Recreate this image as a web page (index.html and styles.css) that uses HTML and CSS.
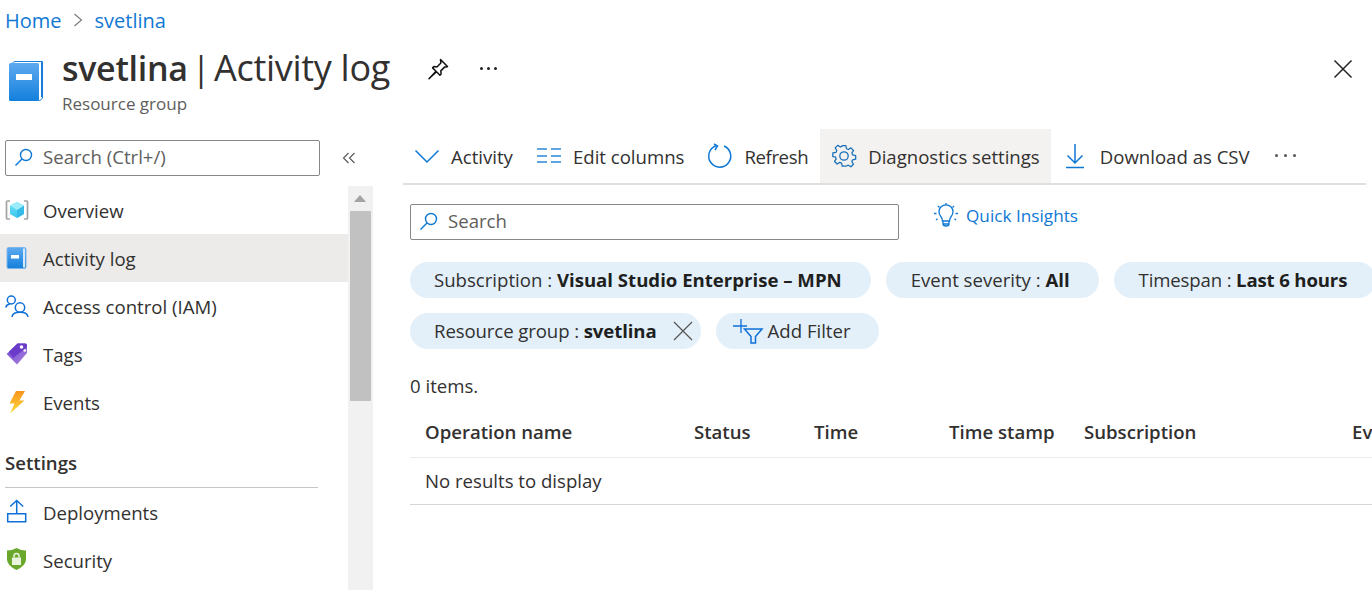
FILE: index.html
```html
<!DOCTYPE html>
<html lang="en">
<head>
<meta charset="utf-8">
<title>svetlina | Activity log</title>
<link rel="stylesheet" href="styles.css">
</head>
<body>
<svg class="defs" width="0" height="0">
  <defs>
    <linearGradient id="bookGrad" x1="0" y1="0" x2="0" y2="1"><stop offset="0" stop-color="#5ea9f0"/><stop offset="1" stop-color="#1380dc"/></linearGradient>
    <linearGradient id="tagGrad" x1="0" y1="0" x2="1" y2="1"><stop offset="0" stop-color="#6f3fd0"/><stop offset="1" stop-color="#a884dc"/></linearGradient>
    <linearGradient id="boltGrad" x1="0" y1="0" x2="0" y2="1"><stop offset="0" stop-color="#f7931e"/><stop offset="1" stop-color="#fedc3c"/></linearGradient>
    <linearGradient id="cubeGrad" x1="0" y1="0" x2="0" y2="1"><stop offset="0" stop-color="#6fe3f7"/><stop offset="1" stop-color="#3cc5ee"/></linearGradient>
  </defs>
</svg>
<nav class="breadcrumb">
  <a class="crumb">Home</a>
  <svg class="crumb-sep" width="12" height="14" viewBox="0 0 12 14"><path d="M2.500 1l7 6-7 6" fill="none" stroke="#777" stroke-width="1.100"/></svg>
  <a class="crumb">svetlina</a>
</nav>
<header class="page-header">
  <svg class="header-icon" width="34" height="40" viewBox="0 0 34 40">
    <path d="M3 2.500Q4.500.5 6 .5h27.500V37l-3 3z" fill="#fff" stroke="#1a7fd8"/>
    <path d="M32.500 1v35" stroke="#1a7fd8"/>
    <rect y="2" width="30" height="38" rx="1.500" fill="url(#bookGrad)"/>
    <rect x="7" y="13" width="16" height="6" fill="#fff"/>
  </svg>
  <div class="header-text">
    <div class="title-row">
      <h1 class="title"><b class="title-name">svetlina</b> | <span class="title-page">Activity log</span></h1>
      <svg class="pin" width="24" height="24" viewBox="0 0 24 24"><path d="M14.500 2.500l7 7-1.300.6-1.400-.2-4 4 .3 3-1.200 1.300-3.400-3.400-7.500 7 7-7.500-3.400-3.400 1.300-1.300 3 .4 4-4-.2-1.400z" fill="none" stroke="#111" stroke-width="1.500" stroke-linejoin="round"/></svg>
      <span class="title-more"><i></i><i></i><i></i></span>
    </div>
    <div class="subtitle">Resource group</div>
  </div>
  <svg class="close" width="20" height="20" viewBox="0 0 20 20"><path d="M1.500 1.500l17 17M18.500 1.500l-17 17" stroke="#222" stroke-width="1.500"/></svg>
</header>
<div class="layout">
  <aside class="sidebar">
    <div class="side-top">
      <div class="search side-search">
        <svg class="search-icon" width="20" height="20" viewBox="0 0 20 20"><circle cx="12" cy="8" r="5.500" fill="none" stroke="#0f78d4" stroke-width="1.400"/><path d="M8 12l-6.500 6.500" stroke="#0f78d4" stroke-width="1.400"/></svg>
        <span>Search (Ctrl+/)</span>
      </div>
      <svg class="collapse" width="14" height="12" viewBox="0 0 14 12"><path d="M6.500 1L1.500 6l5 5M12.500 1l-5 5 5 5" fill="none" stroke="#555" stroke-width="1.100"/></svg>
    </div>
    <div class="side-body">
      <ul class="menu">
        <li class="menu-item">
          <svg class="menu-icon" width="24" height="24" viewBox="0 0 24 24"><path d="M5 3H2.500Q1.500 3 1.500 4v16q0 1 1 1H5M19 3h2.500q1 0 1 1v16q0 1-1 1H19" fill="none" stroke="#a3a3a3" stroke-width="1.700"/><path d="M12 4l7 3.500v8.500l-7 4-7-4V7.500z" fill="url(#cubeGrad)"/><path d="M12 12l7-4.500v8.500l-7 4z" fill="#36bce6"/><path d="M12 12L5 7.500 12 4l7 3.500z" fill="#9cebf9"/></svg>
          <span>Overview</span>
        </li>
        <li class="menu-item active">
          <svg class="menu-icon" width="24" height="24" viewBox="0 0 24 24"><path d="M3.500 1.500h16q1.500 0 1.500 1.500v18q0 1.500-1.500 1.500h-16q-1.500 0-1.500-1.500V3q0-1.500 1.500-1.500z" fill="url(#bookGrad)" stroke="#7db7ea"/><rect x="18" y="2.500" width="2" height="19" fill="#d6e9fa"/><rect x="6" y="9" width="8" height="3.500" fill="#fff"/></svg>
          <span>Activity log</span>
        </li>
        <li class="menu-item">
          <svg class="menu-icon" width="24" height="24" viewBox="0 0 24 24"><g fill="none" stroke="#0f6fd8" stroke-width="1.500"><circle cx="6.300" cy="6" r="4"/><circle cx="15" cy="13.500" r="4.700"/><path d="M.8 13.500q.6-3 4-3.500M7 23q.5-4.800 8-4.800T23 23"/></g></svg>
          <span>Access control (IAM)</span>
        </li>
        <li class="menu-item">
          <svg class="menu-icon" width="24" height="24" viewBox="0 0 24 24"><path d="M12.500 1.500l7.500 0q2 0 2 2v7.500L12 22.500 1.700 12z" fill="url(#tagGrad)"/><path d="M12.500 1.500l7.500 0q2 0 2 2v1.500L8 16 4 9.500z" fill="#6a3bc8"/><circle cx="16.500" cy="5" r="1.800" fill="#fff"/><circle cx="19.800" cy="8.500" r="1.300" fill="#fff"/></svg>
          <span>Tags</span>
        </li>
        <li class="menu-item">
          <svg class="menu-icon" width="24" height="24" viewBox="0 0 24 24"><path d="M11 1h9l-5.500 9.500h5L5 23.500l4.500-10H4.500z" fill="url(#boltGrad)"/></svg>
          <span>Events</span>
        </li>
      </ul>
      <div class="menu-group">Settings</div>
      <ul class="menu">
        <li class="menu-item">
          <svg class="menu-icon" width="24" height="24" viewBox="0 0 24 24"><path d="M2.700 13.700h18v8h-18z" fill="none" stroke="#0f6fd8" stroke-width="1.500"/><path d="M11.700 13.700V.5M5.200 6.500L11.700.5l6.500 6" fill="none" stroke="#0f6fd8" stroke-width="1.500"/></svg>
          <span>Deployments</span>
        </li>
        <li class="menu-item">
          <svg class="menu-icon" width="24" height="24" viewBox="0 0 24 24"><path d="M11.500 0q4.500 2.500 9.500 2.500v9q0 6-9.500 10.500Q2 17.500 2 11.500v-9q5 0 9.500-2.500z" fill="#69a82c"/><path d="M7 9.500h9V17H7z" fill="#e9f3dd"/><path d="M9 9.500V8a2.500 2.500 0 0 1 5 0v1.500" fill="none" stroke="#e9f3dd" stroke-width="1.500"/></svg>
          <span>Security</span>
        </li>
      </ul>
      <div class="scrollbar">
        <svg class="scroll-arrow" width="12" height="7" viewBox="0 0 12 7"><path d="M0 7L6 0l6 7z" fill="#a3a3a3"/></svg>
        <div class="scroll-thumb"></div>
      </div>
    </div>
  </aside>
  <main class="main">
    <div class="toolbar">
      <button class="tool">
        <svg width="24" height="24" viewBox="0 0 24 24"><path d="M.5 6.500L12 18 23.500 6.500" fill="none" stroke="#0f78d4" stroke-width="1.500"/></svg>
        <span>Activity</span>
      </button>
      <button class="tool">
        <svg width="24" height="24" viewBox="0 0 24 24"><path d="M0 5h10M14 5h10M0 12h10M14 12h10M0 18h10M14 18h10" stroke="#2b88d8" stroke-width="1.700"/></svg>
        <span>Edit columns</span>
      </button>
      <button class="tool tool-refresh">
        <svg width="24" height="24" viewBox="0 0 24 24"><path d="M8 1.800A11 11 0 1 0 16 2" fill="none" stroke="#0f78d4" stroke-width="1.500"/><path d="M6 0l3.500 2L7 6" fill="none" stroke="#0f78d4" stroke-width="1.500"/></svg>
        <span>Refresh</span>
      </button>
      <button class="tool tool-hover">
        <svg width="24" height="24" viewBox="0 0 24 24"><path d="M10 1h4l.7 3.300 2 .9 2.900-1.800 2.800 2.800-1.800 2.900.9 2 3.300.7v4l-3.300.7-.9 2 1.800 2.900-2.800 2.800-2.900-1.800-2 .9L14 23.500h-4l-.7-3.300-2-.9-2.900 1.800-2.800-2.800 1.800-2.900-.9-2L-.3 13v-4l3.500-.7.900-2-1.800-2.900 2.800-2.800 2.900 1.800 2-.9z" transform="translate(1.100 .8) scale(.91)" fill="none" stroke="#1a6fb8" stroke-width="1.400" stroke-linejoin="round"/><circle cx="12" cy="12" r="4.200" fill="none" stroke="#1a6fb8" stroke-width="1.300"/></svg>
        <span>Diagnostics settings</span>
      </button>
      <button class="tool tool-download">
        <svg width="24" height="24" viewBox="0 0 24 24"><path d="M12 0v19M4.500 11.500L12 19l7.500-7.500M3 23.500h18" fill="none" stroke="#0f78d4" stroke-width="1.500"/></svg>
        <span>Download as CSV</span>
      </button>
      <span class="tool-more"><i></i><i></i><i></i></span>
    </div>
    <div class="content">
      <div class="search-row">
        <div class="search main-search">
          <svg class="search-icon" width="20" height="20" viewBox="0 0 20 20"><circle cx="12" cy="8" r="5.500" fill="none" stroke="#0f78d4" stroke-width="1.400"/><path d="M8 12l-6.500 6.500" stroke="#0f78d4" stroke-width="1.400"/></svg>
          <span>Search</span>
        </div>
        <a class="insights">
          <svg width="24" height="24" viewBox="0 0 24 24"><g fill="none" stroke="#0f78d4" stroke-width="1.300"><path d="M8.500 18q0-2.500-1.700-4.500A7 7 0 1 1 17.200 13.500Q15.500 15.500 15.500 18zM9 18.500v2.500q0 2 3 2t3-2v-2.500M9 21h6"/><path d="M12 0v2M4 3l1.500 1.500M20 3l-1.500 1.500M0 10.500h2.500M24 10.500h-2.500M2 17l1.500-1.300M22 17l-1.500-1.300"/></g></svg>
          <span>Quick Insights</span>
        </a>
      </div>
      <div class="pills">
        <span class="pill">Subscription : <b>Visual Studio Enterprise – MPN</b></span>
        <span class="pill pill-next">Event severity : <b>All</b></span>
        <span class="pill pill-next pill-time">Timespan : <b>Last 6 hours</b></span>
      </div>
      <div class="pills">
        <span class="pill pill-rg">Resource group : <b>svetlina</b><svg class="pill-x" width="20" height="20" viewBox="0 0 20 20"><path d="M1 1l18 18M19 1L1 19" stroke="#555" stroke-width="1.200"/></svg></span>
        <span class="pill pill-add">
          <svg width="30" height="26" viewBox="0 0 30 26"><path d="M0 8h14M8 1v14" stroke="#0f6fd8" stroke-width="1.300"/><path d="M11.500 11H29l-6.500 7.500V25h-4.500v-6.500z" fill="none" stroke="#0f6fd8" stroke-width="1.500"/></svg>
          <span>Add Filter</span>
        </span>
      </div>
      <div class="count">0 items.</div>
      <div class="table">
        <div class="thead">
          <span>Operation name</span><span>Status</span><span>Time</span><span>Time stamp</span><span>Subscription</span><span>Ev</span>
        </div>
        <div class="tbody">No results to display</div>
      </div>
    </div>
  </main>
</div>
</body>
</html>
```
FILE: styles.css
```css
* { box-sizing: border-box; }
html, body { margin: 0; height: 100%; }
body {
  width: 1372px;
  height: 590px;
  overflow: hidden;
  background: #fff;
  color: #323130;
  font-family: "Open Sans", "Noto Sans", sans-serif;
  font-size: 18.6px;
  display: flex;
  flex-direction: column;
}
.defs { position: absolute; }
ul { list-style: none; margin: 0; padding: 0; }
svg { display: block; flex: none; overflow: visible; }

.breadcrumb { height: 40px; padding: 0 0 0 5px; display: flex; align-items: center; gap: 10.5px; }
.crumb { color: #0f78d4; font-size: 20px; }

.page-header { height: 89px; display: flex; padding: 0 19px 0 9px; }
.header-icon { margin-top: 21px; }
.header-text { margin-left: 19px; flex: 1; }
.title-row { display: flex; align-items: center; height: 58px; }
.title { margin: -2px 0 0; font-size: 34px; font-weight: 400; letter-spacing: -0.3px; word-spacing: -4.5px; color: #323130; line-height: 58px; }
.title-name { font-weight: 600; }
.title-page { font-size: 36px; word-spacing: 0; }
.pin { margin-left: 36px; }
.title-more { margin-left: 30px; display: flex; gap: 4px; margin-top: -2px; }
.title-more i { width: 3px; height: 3px; border-radius: 50%; background: #222; }
.subtitle { font-size: 17px; color: #605e5c; line-height: 22px; margin-top: -5px; }
.close { margin-top: 19px; }

.layout { flex: 1; display: flex; min-height: 0; }
.sidebar { width: 373px; flex: none; display: flex; flex-direction: column; }
.side-top { height: 57px; display: flex; align-items: center; padding: 0 0 0 5px; }
.search { display: flex; align-items: center; border: 1px solid #8a8886; border-radius: 2px; color: #605e5c; height: 36px; padding-bottom: 2px; }
.side-search { width: 315px; padding-left: 8px; }
.search-icon { margin-right: 9px; }
.collapse { margin-left: 22px; }
.side-body { flex: 1; position: relative; min-height: 0; overflow: hidden; }
.menu-item { height: 48px; display: flex; align-items: center; padding-left: 5px; width: 348px; gap: 14px; }
.active { background: #edebe9; }
.menu-group { width: 313px; margin-left: 5px; height: 62px; padding-top: 24px; line-height: 26px; font-weight: 600; border-bottom: 1px solid #c8c6c4; color: #323130; }
.scrollbar { position: absolute; top: 0; bottom: 0; left: 348px; width: 25px; background: #f1f1f1; }
.scroll-arrow { position: absolute; top: 9px; left: 6px; }
.scroll-thumb { position: absolute; top: 25px; left: 2px; width: 21px; height: 190px; background: #c1c1c1; }

.main { flex: 1; min-width: 0; padding-left: 30px; overflow: hidden; }
.toolbar { height: 56px; width: 963px; display: flex; align-items: stretch; border-bottom: 2px solid #e1dfdd; }
.tool { border: 0; background: none; padding: 0 12px; font: inherit; color: #323130; display: flex; align-items: center; gap: 12px; height: 54px; }
.tool-refresh span { letter-spacing: -0.4px; }
.tool-hover { background: #f3f2f1; padding-right: 11px; }
.tool-download { gap: 13px; }
.tool-more { display: flex; align-items: center; gap: 6px; margin-left: 13px; margin-top: -2px; }
.tool-more i { width: 3px; height: 3px; border-radius: 50%; background: #555; }

.content { padding-left: 7px; }
.search-row { display: flex; padding-top: 19px; height: 77px; }
.main-search { width: 489px; padding-left: 8px; }
.main-search span { margin-top: -2px; }
.insights { margin-left: 35px; display: flex; align-items: center; gap: 8px; color: #0f78d4; font-size: 17.2px; height: 24px; margin-top: -1px; }
.pills { display: flex; gap: 15px; margin-bottom: 15px; white-space: nowrap; }
.pill { height: 36px; border-radius: 18px; background: #e3f0fa; display: inline-flex; align-items: center; padding: 0 29px 2px 24px; flex: none; white-space: pre; }
.pill b { font-weight: 700; color: #201f1e; }
.pill-next { padding-left: 25px; }
.pill-time { letter-spacing: -0.15px; }
.pill-rg { padding-right: 8px; letter-spacing: -0.1px; }
.pill-x { margin-left: 16px; margin-top: 2px; }
.pill-add { padding: 0 28px 2px 17px; gap: 5px; }
.pill-add svg { margin-top: 2px; }
.count { margin-top: 25px; line-height: 24px; }
.table { margin-top: 13px; }
.thead { display: grid; grid-template-columns: 269px 120px 135px 135px 268px 20px; padding-left: 15px; height: 47px; line-height: 41px; font-weight: 600; border-bottom: 1px solid #edebe9; width: 962px; white-space: nowrap; }
.tbody { height: 47px; line-height: 45px; padding-left: 15px; border-bottom: 1px solid #d6d6d6; }
```
